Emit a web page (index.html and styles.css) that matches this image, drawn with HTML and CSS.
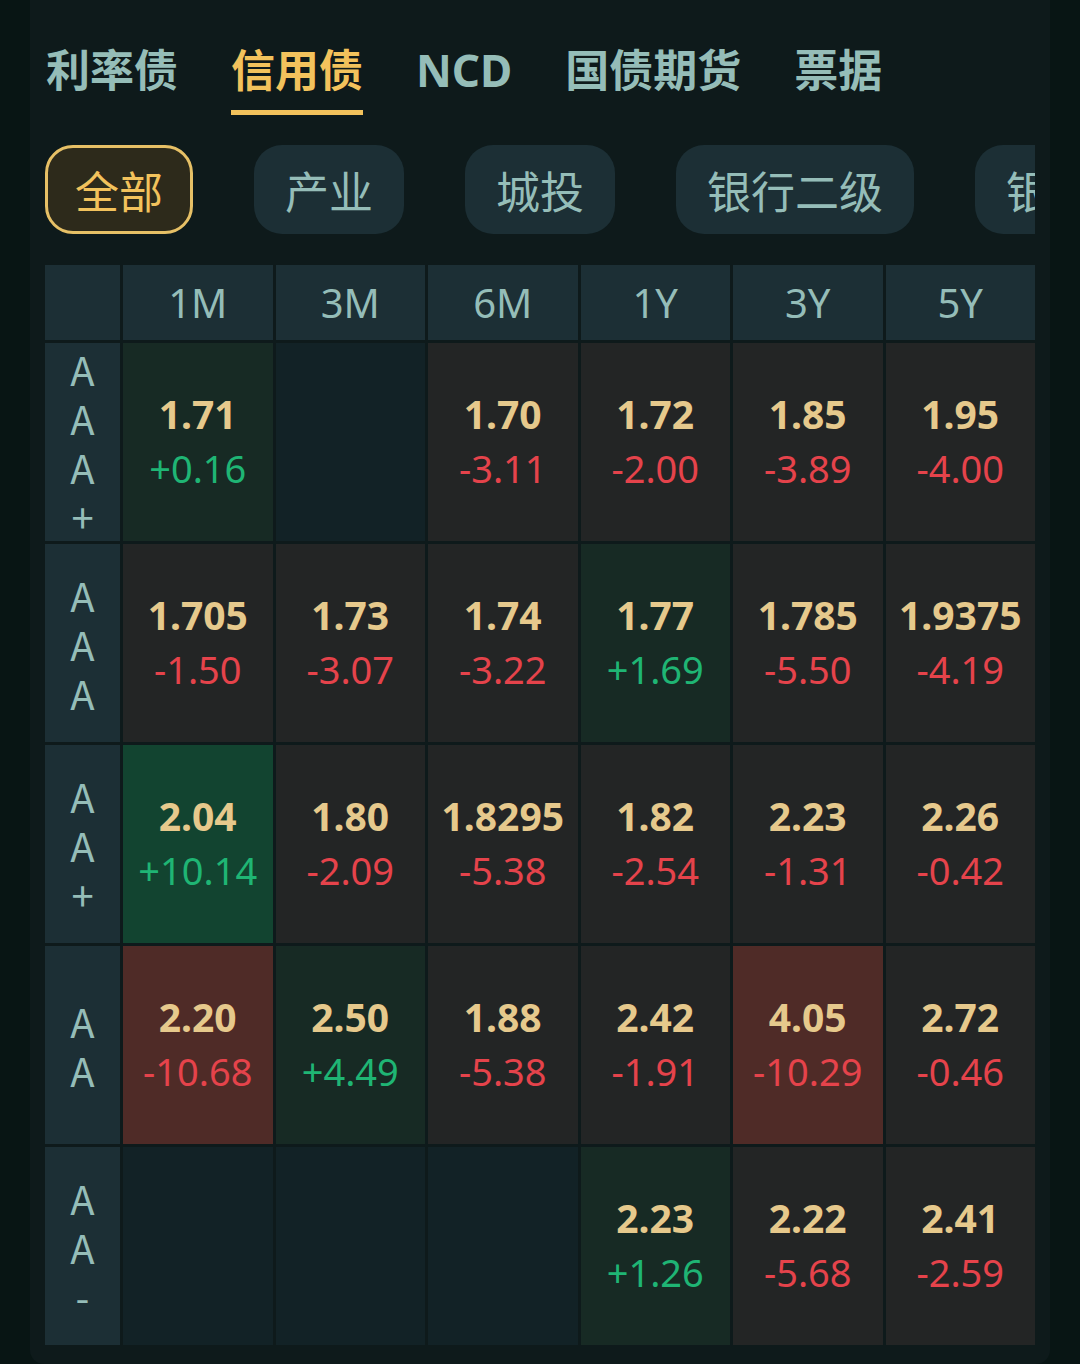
FILE: index.html
```html
<!DOCTYPE html>
<html lang="zh-CN">
<head>
    <meta charset="UTF-8">
    <meta name="viewport" content="width=device-width, initial-scale=1.0">
    <title>信用债</title>
    <link rel="stylesheet" href="styles.css">
</head>
<body>
    <div class="panel">
        <nav class="tabs">
            <a class="tab">利率债</a>
            <a class="tab active">信用债</a>
            <a class="tab">NCD</a>
            <a class="tab">国债期货</a>
            <a class="tab">票据</a>
        </nav>

        <div class="chips">
            <span class="chip active">全部</span>
            <span class="chip">产业</span>
            <span class="chip">城投</span>
            <span class="chip">银行二级</span>
            <span class="chip">银行永续</span>
        </div>

        <div class="grid">
            <div class="head"></div>
            <div class="head">1M</div>
            <div class="head">3M</div>
            <div class="head">6M</div>
            <div class="head">1Y</div>
            <div class="head">3Y</div>
            <div class="head">5Y</div>

            <div class="rating"><p>AAA+</p></div>
            <div class="cell up-soft"><b>1.71</b><i class="up">+0.16</i></div>
            <div class="cell empty"></div>
            <div class="cell"><b>1.70</b><i class="down">-3.11</i></div>
            <div class="cell"><b>1.72</b><i class="down">-2.00</i></div>
            <div class="cell"><b>1.85</b><i class="down">-3.89</i></div>
            <div class="cell"><b>1.95</b><i class="down">-4.00</i></div>

            <div class="rating"><p>AAA</p></div>
            <div class="cell"><b>1.705</b><i class="down">-1.50</i></div>
            <div class="cell"><b>1.73</b><i class="down">-3.07</i></div>
            <div class="cell"><b>1.74</b><i class="down">-3.22</i></div>
            <div class="cell up-soft"><b>1.77</b><i class="up">+1.69</i></div>
            <div class="cell"><b>1.785</b><i class="down">-5.50</i></div>
            <div class="cell"><b>1.9375</b><i class="down">-4.19</i></div>

            <div class="rating"><p>AA+</p></div>
            <div class="cell up-strong"><b>2.04</b><i class="up">+10.14</i></div>
            <div class="cell"><b>1.80</b><i class="down">-2.09</i></div>
            <div class="cell"><b>1.8295</b><i class="down">-5.38</i></div>
            <div class="cell"><b>1.82</b><i class="down">-2.54</i></div>
            <div class="cell"><b>2.23</b><i class="down">-1.31</i></div>
            <div class="cell"><b>2.26</b><i class="down">-0.42</i></div>

            <div class="rating"><p>AA</p></div>
            <div class="cell down-strong"><b>2.20</b><i class="down">-10.68</i></div>
            <div class="cell up-soft"><b>2.50</b><i class="up">+4.49</i></div>
            <div class="cell"><b>1.88</b><i class="down">-5.38</i></div>
            <div class="cell"><b>2.42</b><i class="down">-1.91</i></div>
            <div class="cell down-strong"><b>4.05</b><i class="down">-10.29</i></div>
            <div class="cell"><b>2.72</b><i class="down">-0.46</i></div>

            <div class="rating"><p>AA-</p></div>
            <div class="cell empty"></div>
            <div class="cell empty"></div>
            <div class="cell empty"></div>
            <div class="cell up-soft"><b>2.23</b><i class="up">+1.26</i></div>
            <div class="cell"><b>2.22</b><i class="down">-5.68</i></div>
            <div class="cell"><b>2.41</b><i class="down">-2.59</i></div>
        </div>
    </div>
</body>
</html>
```

FILE: styles.css
```css
:root {
    --page: #081514;
    --panel: #0e1a1b;
    --tile: #1c2f35;
    --muted: #95bdb8;
    --gold: #f2c25c;
    --value: #e6c98c;
    --up: #1fb574;
    --down: #e5434b;
}

* {
    margin: 0;
    padding: 0;
    box-sizing: border-box;
    font-family: 'Noto Sans', 'Noto Sans CJK SC', sans-serif;
}

body {
    background: var(--page);
    height: 1364px;
    overflow: hidden;
}

.panel {
    margin-left: 30px;
    width: 1020px;
    height: 1364px;
    background: var(--panel);
    border-radius: 0 0 14px 14px;
    padding: 44px 15px 0;
}

.tabs {
    display: flex;
    gap: 53px;
    padding-left: 1px;
}

.tab {
    color: var(--muted);
    font-size: 44px;
    font-weight: 700;
    line-height: 52px;
    padding-bottom: 19px;
    position: relative;
}

.tab.active {
    color: var(--gold);
}

.tab.active::after {
    content: "";
    position: absolute;
    left: 0;
    right: 0;
    bottom: 0;
    height: 5px;
    background: var(--gold);
}

.chips {
    display: flex;
    gap: 61px;
    margin-top: 30px;
    overflow: hidden;
}

.chip {
    flex-shrink: 0;
    height: 89px;
    padding: 0 31px;
    border-radius: 28px;
    background: var(--tile);
    color: var(--muted);
    font-size: 44px;
    display: flex;
    align-items: center;
}

.chip.active {
    background: #2d2a1b;
    border: 3px solid #e6c066;
    color: var(--gold);
    padding: 0 27px;
}

.grid {
    display: grid;
    grid-template-columns: 75px repeat(6, 1fr);
    grid-template-rows: 75px repeat(5, 198px);
    gap: 3px;
    margin-top: 31px;
}

.head {
    background: var(--tile);
    color: var(--muted);
    font-size: 40px;
    display: flex;
    align-items: center;
    justify-content: center;
}

/* rating letters stacked one per slot */
.rating {
    background: var(--tile);
    color: var(--muted);
    display: flex;
    align-items: center;
    justify-content: center;
    padding-top: 14px;
}

.rating p {
    font-family: 'Noto Sans CJK SC', sans-serif;
    font-size: 40px;
    line-height: 1;
    writing-mode: vertical-rl;
    text-orientation: upright;
    letter-spacing: 9px;
}

.cell {
    background: #232525;
    display: flex;
    flex-direction: column;
    align-items: center;
    justify-content: center;
    padding-bottom: 2px;
}

.cell b {
    color: var(--value);
    font-size: 39px;
    font-weight: 700;
    line-height: 54px;
}

.cell i {
    font-style: normal;
    font-size: 38px;
    line-height: 54px;
}

.cell.empty { background: #122226; }
.cell.up-soft { background: #172a24; }
.cell.up-strong { background: #124430; }
.cell.down-strong { background: #4f2b27; }

.up { color: var(--up); }
.down { color: var(--down); }
```
